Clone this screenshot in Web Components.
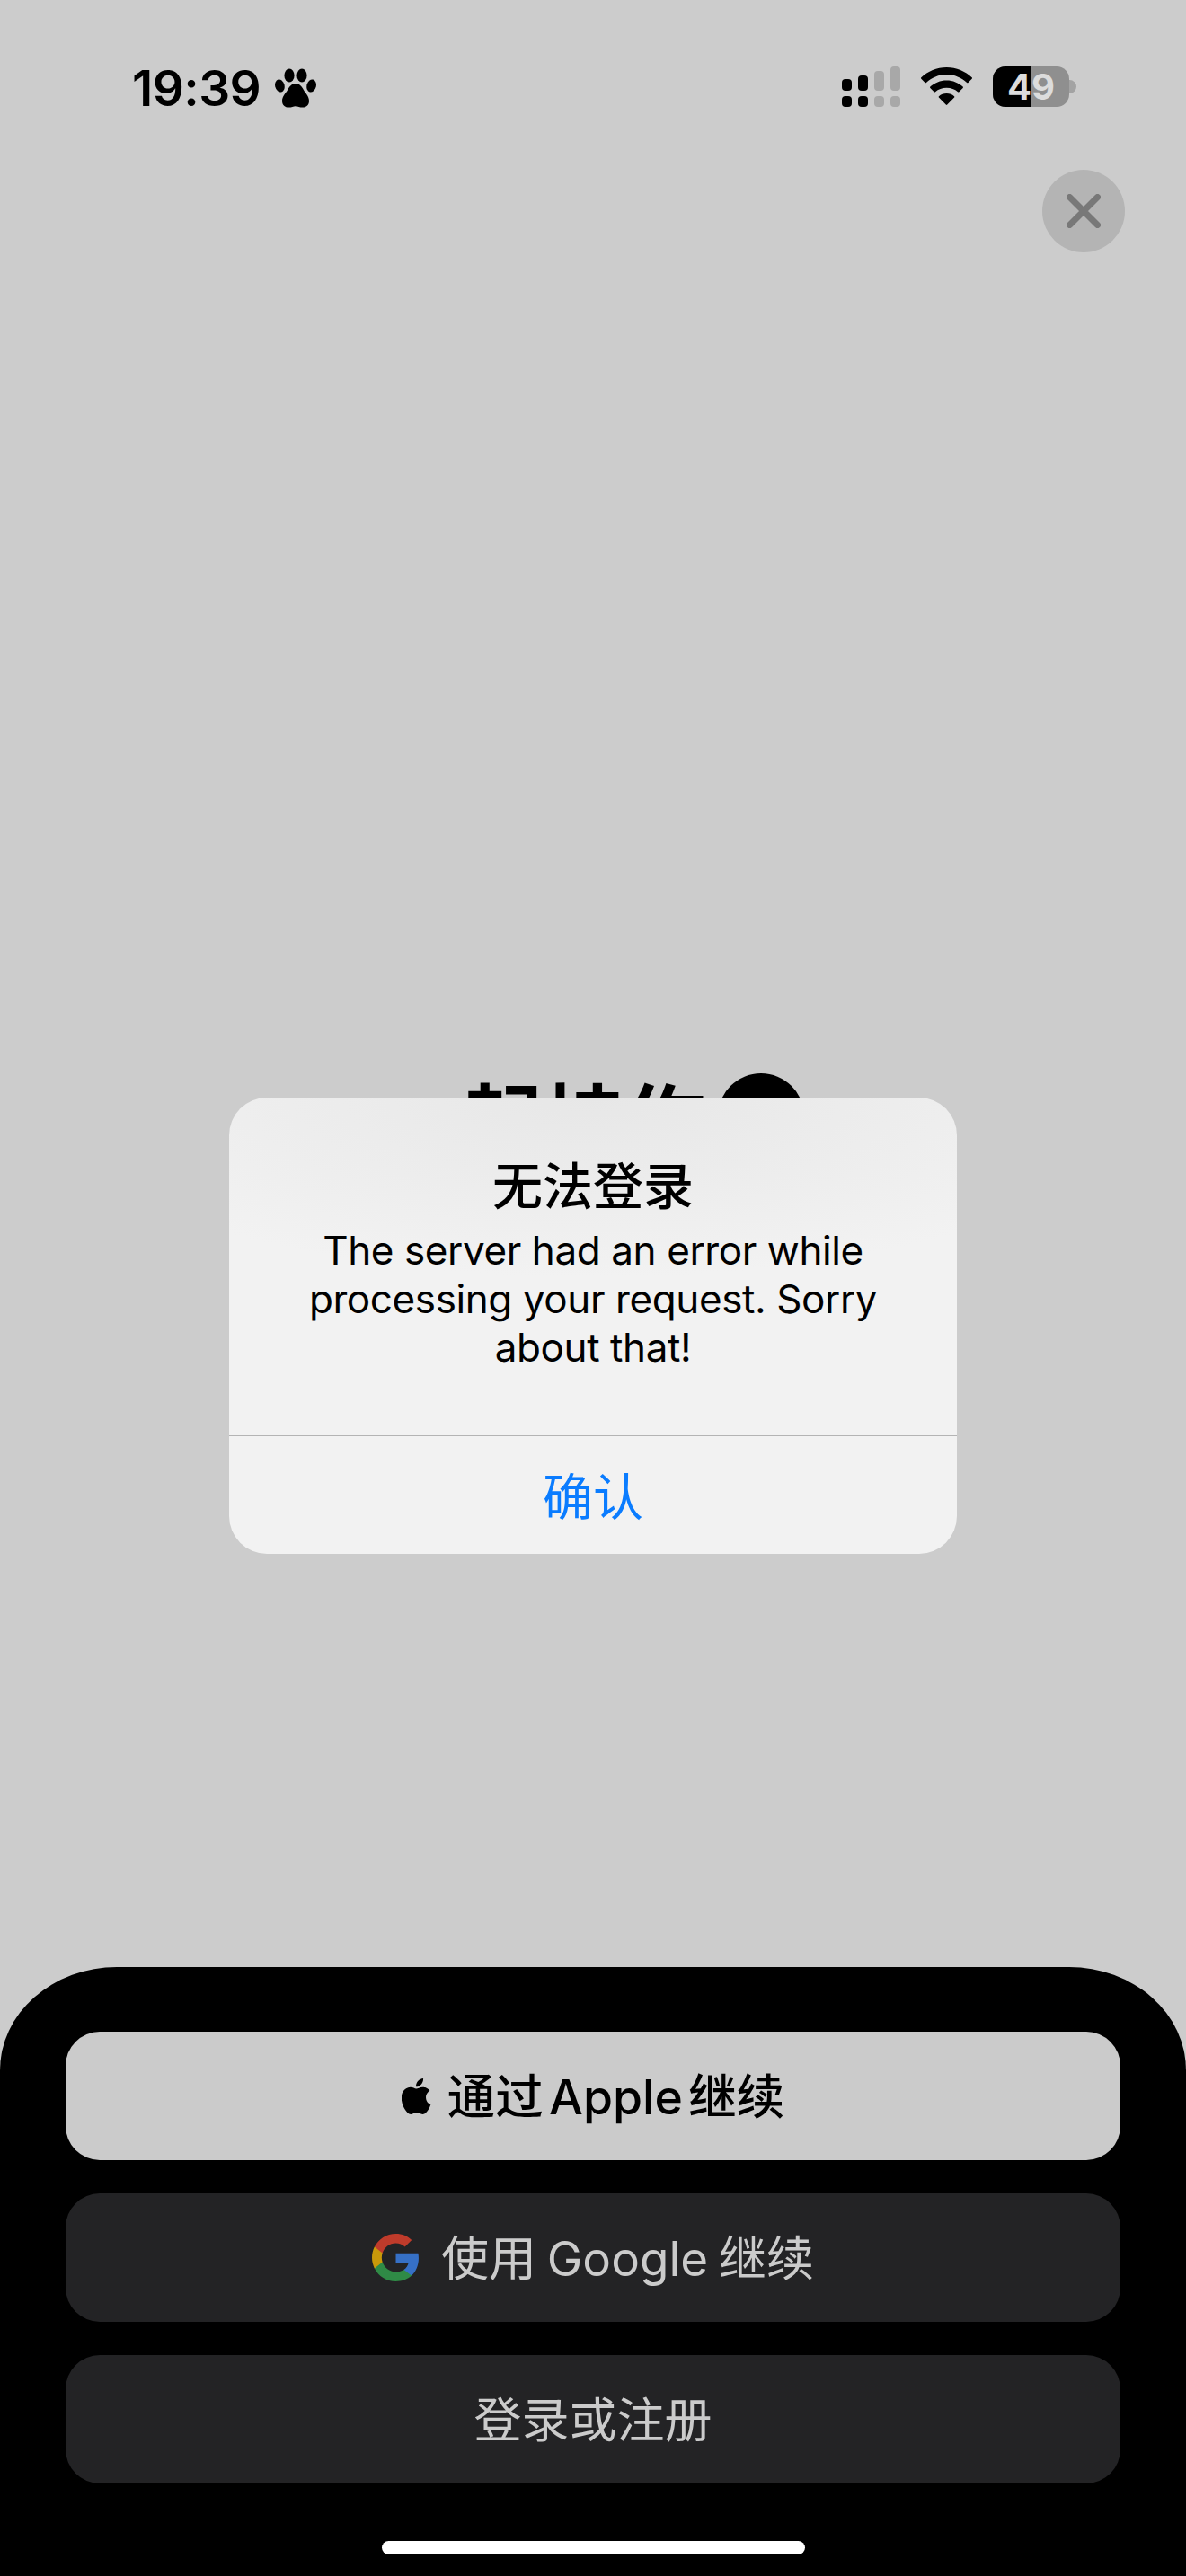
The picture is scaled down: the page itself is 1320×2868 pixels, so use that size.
<!DOCTYPE html>
<html lang="zh">
<head>
<meta charset="utf-8">
<title>登录</title>
<style>
  html, body { margin: 0; padding: 0; }
  body { width: 1320px; height: 2868px; overflow: hidden; background: #cccccc; }
</style>
</head>
<body>
<login-screen>
  <status-bar slot="status" time="19:39"></status-bar>
  <close-button slot="close"></close-button>
  <brand-heading slot="heading">一起持作</brand-heading>
  <alert-dialog slot="dialog" title="无法登录" action="确认">The server had an error while processing your request. Sorry about that!</alert-dialog>
  <auth-sheet slot="sheet">
    <auth-button variant="light" icon="apple" tight>通过 Apple 继续</auth-button>
    <auth-button icon="google">使用 Google 继续</auth-button>
    <auth-button>登录或注册</auth-button>
  </auth-sheet>
</login-screen>

<script>
const FONT = '"Inter", "Noto Sans CJK SC", sans-serif';
const CJK = '"Noto Sans CJK SC", "Inter", sans-serif';

class LoginScreen extends HTMLElement {
  constructor() {
    super();
    this.attachShadow({ mode: "open" }).innerHTML = `
      <style>
        :host { display: flex; flex-direction: column; position: relative; width: 1320px; height: 2868px; background: #cccccc; overflow: hidden; }
        .top { flex: 1; display: flex; flex-direction: column; }
        .close { display: flex; justify-content: flex-end; padding: 51px 68px 0 0; }
      </style>
      <div class="top">
        <slot name="status"></slot>
        <div class="close"><slot name="close"></slot></div>
        <slot name="heading"></slot>
      </div>
      <slot name="dialog"></slot>
      <slot name="sheet"></slot>
    `;
  }
}

class StatusBar extends HTMLElement {
  constructor() {
    super();
    this.attachShadow({ mode: "open" }).innerHTML = `
      <style>
        :host { display: flex; justify-content: space-between; align-items: flex-start; height: 138px; padding: 0 122px 0 147px; box-sizing: border-box; font-family: ${FONT}; }
        .left { display: flex; align-items: center; gap: 16px; padding-top: 66px; }
        .time { font-size: 55px; line-height: 64px; font-weight: 600; letter-spacing: -0.6px; color: #000; }
        .right { display: flex; align-items: flex-start; padding-top: 74px; }
        svg { display: block; }
        .wifi { margin: 1px 23px 0 23px; }
        .battery { position: relative; width: 85px; height: 45px; border-radius: 14px; background: #8f8f8f; font-size: 40px; line-height: 45px; font-weight: 700; text-align: center; color: #dcdcdc; }
        .battery i { position: absolute; left: 0; top: 0; bottom: 0; width: 42px; background: #000; border-radius: 14px 0 0 14px; }
        .battery span { position: relative; }
        .nub { width: 8px; height: 15px; margin: 15px 0 0 0; background: #a3a3a3; border-radius: 0 8px 8px 0; }
      </style>
      <div class="left">
        <span class="time">${this.getAttribute("time")}</span>
        <svg width="46" height="44" viewBox="0 0 46 44" fill="#000">
          <ellipse cx="16" cy="8" rx="5.6" ry="7.6"/>
          <ellipse cx="30" cy="8" rx="5.6" ry="7.6"/>
          <ellipse cx="5.4" cy="19.5" rx="5.2" ry="7.2" transform="rotate(-14 5.4 19.5)"/>
          <ellipse cx="40.6" cy="19.5" rx="5.2" ry="7.2" transform="rotate(14 40.6 19.5)"/>
          <path d="M23 17c-4.4 0-7 3.4-9 7.200-1.700 3.200-6 6.600-6 12.200 0 4.400 3.200 7.200 7.400 7.200 3 0 5.200-1.400 7.600-1.400s4.600 1.400 7.600 1.400c4.200 0 7.400-2.800 7.400-7.200 0-5.600-4.300-9-6-12.200-2-3.800-4.600-7.200-9-7.200z"/>
        </svg>
      </div>
      <div class="right">
        <svg width="65" height="45" viewBox="0 0 65 45">
          <g fill="#000">
            <rect x="0" y="14" width="11" height="13" rx="4"/><rect x="0" y="33" width="11" height="12" rx="4"/>
            <rect x="18" y="10" width="11" height="17" rx="4"/><rect x="18" y="33" width="11" height="12" rx="4"/>
          </g>
          <g fill="#a8a8a8">
            <rect x="36" y="5" width="11" height="22" rx="4"/><rect x="36" y="33" width="11" height="12" rx="4"/>
            <rect x="54" y="0" width="11" height="27" rx="4"/><rect x="54" y="33" width="11" height="12" rx="4"/>
          </g>
        </svg>
        <svg class="wifi" width="57" height="42" viewBox="0 0 57 42" fill="#000">
          <path d="M28.500 0C17.500 0 7.600 4.300 0.300 11.300c-.4.400-.4 1 0 1.400l4.200 4.300c.4.400 1 .4 1.400 0C11.800 11.400 19.800 8 28.500 8s16.700 3.400 22.600 9c.4.400 1 .4 1.400 0l4.200-4.300c.4-.4.4-1 0-1.400C49.400 4.300 39.500 0 28.500 0z"/>
          <path d="M28.500 14.500c-7 0-13.400 2.700-18.200 7.100-.4.400-.4 1 0 1.400l4.300 4.300c.4.400 1 .4 1.400 0 3.200-2.800 7.600-4.500 12.500-4.500s9.300 1.700 12.500 4.500c.4.400 1 .4 1.400 0l4.300-4.300c.4-.4.4-1 0-1.400-4.800-4.400-11.200-7.100-18.200-7.100z"/>
          <path d="M28.500 29c-3.300 0-6.300 1.200-8.600 3.200-.4.400-.4 1 0 1.400l7.900 8c.4.400 1 .4 1.400 0l7.900-8c.4-.4.4-1 0-1.400-2.300-2-5.300-3.200-8.600-3.200z"/>
        </svg>
        <div class="battery"><i></i><span>49</span></div>
        <div class="nub"></div>
      </div>
    `;
  }
}

class CloseButton extends HTMLElement {
  constructor() {
    super();
    this.attachShadow({ mode: "open" }).innerHTML = `
      <style>
        :host { display: flex; align-items: center; justify-content: center; width: 92px; height: 92px; border-radius: 50%; background: #b4b4b4; }
      </style>
      <svg width="38" height="38" viewBox="0 0 38 38" fill="none" stroke="#787878" stroke-width="7" stroke-linecap="round">
        <path d="M3.500 3.500l31 31M34.500 3.500l-31 31"/>
      </svg>
    `;
  }
}

class BrandHeading extends HTMLElement {
  constructor() {
    super();
    this.attachShadow({ mode: "open" }).innerHTML = `
      <style>
        /* the dialog covers all but the top of it, so only that part is kept */
        :host { display: flex; justify-content: center; align-items: flex-start; gap: 14px; height: 27px; overflow: hidden; margin-top: 914px; font-family: ${CJK}; }
        .text { font-size: 90px; line-height: 100px; font-weight: 700; color: #000; margin-top: -2px; }
        .logo { flex: none; width: 96px; height: 96px; border-radius: 50%; background: #000; }
      </style>
      <span class="text"><slot></slot></span>
      <span class="logo"></span>
    `;
  }
}

class AlertDialog extends HTMLElement {
  constructor() {
    super();
    this.attachShadow({ mode: "open" }).innerHTML = `
      <style>
        /* sits over the heading, like a system alert */
        :host { display: flex; flex-direction: column; position: absolute; left: 255px; top: 1222px; width: 810px; height: 508px; border-radius: 42px; overflow: hidden; color: #000;
          background: radial-gradient(ellipse 620px 200px at 50% 0, #e7e7e7, #f2f2f2 100%); }
        .body { height: 376px; box-sizing: border-box; padding: 59px 60px 0; text-align: center; }
        .title { font-family: ${CJK}; font-size: 56px; line-height: 72px; font-weight: 500; }
        .msg { font-family: ${FONT}; font-size: 44px; line-height: 54px; letter-spacing: -0.4px; margin-top: 12px; }
        .action { height: 132px; padding-bottom: 5px; border-top: 1px solid #b4b4b4; box-sizing: border-box; display: flex; align-items: center; justify-content: center; font-family: ${CJK}; font-size: 56px; color: #0a7cff; }
      </style>
      <div class="body">
        <div class="title">${this.getAttribute("title")}</div>
        <div class="msg"><slot></slot></div>
      </div>
      <div class="action">${this.getAttribute("action")}</div>
    `;
  }
}

class AuthSheet extends HTMLElement {
  constructor() {
    super();
    this.attachShadow({ mode: "open" }).innerHTML = `
      <style>
        :host { display: flex; flex-direction: column; gap: 37px; height: 678px; box-sizing: border-box; padding: 72px 73px 0; background: #000; border-radius: 130px 130px 0 0 / 115px 115px 0 0; position: relative; }
        .home { position: absolute; left: 425px; bottom: 24px; width: 471px; height: 15px; border-radius: 8px; background: #fff; }
      </style>
      <slot></slot>
      <div class="home"></div>
    `;
  }
}

const ICONS = {
  apple: `<svg width="33" height="40" viewBox="2.500 0 19.500 24" fill="#000"><path d="M12.152 6.896c-.948 0-2.415-1.078-3.960-1.040-2.040.027-3.910 1.183-4.961 3.014-2.117 3.675-.546 9.103 1.519 12.090 1.013 1.454 2.208 3.090 3.792 3.039 1.520-.065 2.090-.987 3.935-.987 1.831 0 2.350.987 3.960.948 1.637-.026 2.676-1.480 3.676-2.948 1.156-1.688 1.636-3.325 1.662-3.415-.039-.013-3.182-1.221-3.220-4.857-.026-3.040 2.480-4.494 2.597-4.559-1.429-2.090-3.623-2.324-4.390-2.376-2-.156-3.675 1.090-4.610 1.090zM15.530 3.830c.843-1.012 1.400-2.427 1.245-3.830-1.207.052-2.662.805-3.532 1.818-.780.896-1.454 2.338-1.273 3.714 1.338.104 2.715-.688 3.559-1.701"/></svg>`,
  google: `<svg width="53" height="53" viewBox="1 1 22 22"><path fill="#3670c6" d="M22.560 12.250c0-.78-.07-1.530-.2-2.250H12v4.260h5.920c-.26 1.370-1.040 2.530-2.210 3.310v2.770h3.570c2.080-1.920 3.280-4.740 3.280-8.090z"/><path fill="#2f8a46" d="M12 23c2.970 0 5.460-.98 7.280-2.660l-3.570-2.770c-.98.66-2.230 1.060-3.710 1.060-2.860 0-5.290-1.930-6.160-4.530H2.180v2.840C3.990 20.530 7.700 23 12 23z"/><path fill="#c9990a" d="M5.840 14.090c-.22-.66-.35-1.360-.35-2.090s.13-1.430.35-2.090V7.070H2.180C1.430 8.550 1 10.220 1 12s.43 3.450 1.180 4.930l2.850-2.220.81-.62z"/><path fill="#bf3b2b" d="M12 5.380c1.620 0 3.060.56 4.210 1.640l3.150-3.150C17.450 2.090 14.970 1 12 1 7.700 1 3.990 3.470 2.180 7.070l3.660 2.840c.87-2.600 3.300-4.530 6.160-4.530z"/></svg>`
};

class AuthButton extends HTMLElement {
  constructor() {
    super();
    const icon = ICONS[this.getAttribute("icon")] || "";
    this.attachShadow({ mode: "open" }).innerHTML = `
      <style>
        :host { display: flex; align-items: center; justify-content: center; gap: 24px; height: 143px; flex: none; border-radius: 38px; background: #232325; color: #cbcbcb; font-family: ${FONT}; font-size: 53px; font-weight: 400; word-spacing: -3px; }
        :host([variant="light"]) { background: #cbcbcb; color: #000; font-weight: 500; font-size: 53.5px; gap: 18px; }
        :host([tight]) { word-spacing: -8px; }
        svg { display: block; flex: none; }
        span { padding-bottom: 6px; }
      </style>
      ${icon}<span><slot></slot></span>
    `;
  }
}

customElements.define("login-screen", LoginScreen);
customElements.define("status-bar", StatusBar);
customElements.define("close-button", CloseButton);
customElements.define("brand-heading", BrandHeading);
customElements.define("alert-dialog", AlertDialog);
customElements.define("auth-sheet", AuthSheet);
customElements.define("auth-button", AuthButton);
</script>
</body>
</html>
